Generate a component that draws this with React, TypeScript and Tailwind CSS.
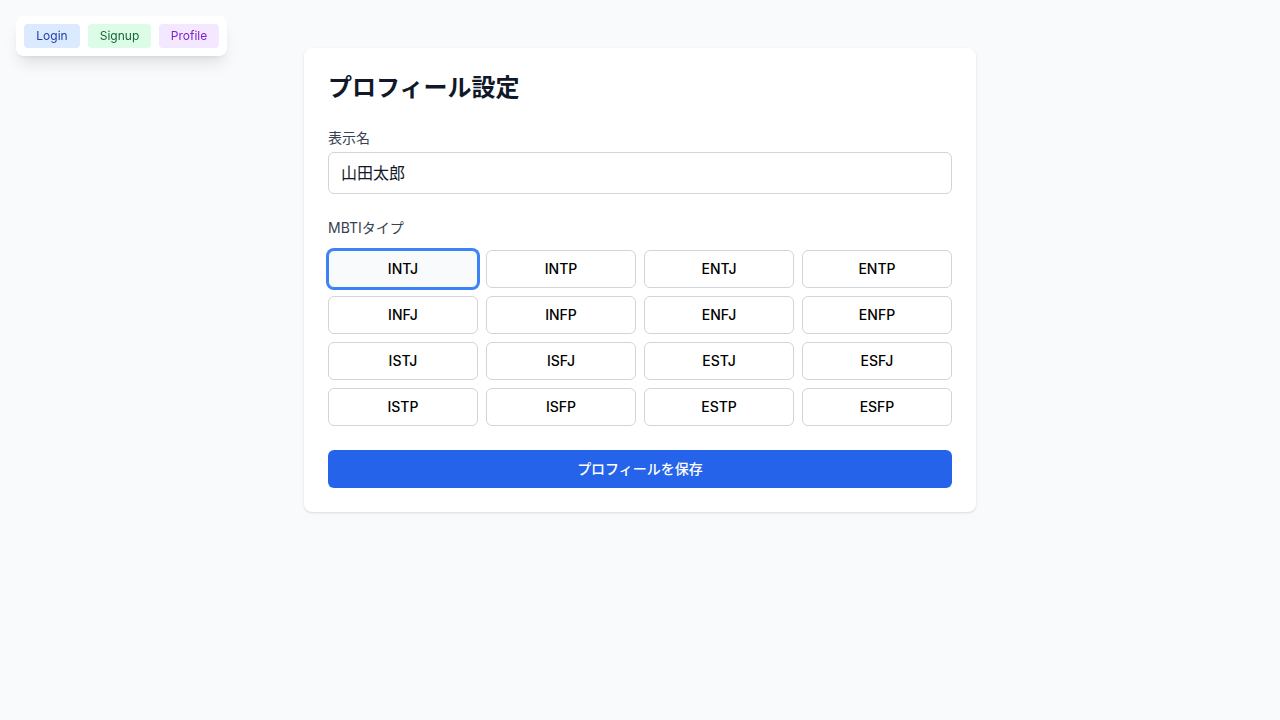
import { useState } from 'react'

const TYPES = [
  'INTJ', 'INTP', 'ENTJ', 'ENTP',
  'INFJ', 'INFP', 'ENFJ', 'ENFP',
  'ISTJ', 'ISFJ', 'ESTJ', 'ESFJ',
  'ISTP', 'ISFP', 'ESTP', 'ESFP',
]

export default function App() {
  const [name, setName] = useState('山田太郎')
  const [mbti, setMbti] = useState('INTJ')

  return (
    <div
      className="min-h-screen bg-[#f9fafb] py-12"
      style={{ fontFamily: 'Inter, "Noto Sans CJK JP", sans-serif' }}
    >
      {/* dev nav */}
      <div className="fixed top-4 left-4 z-10 flex gap-2 rounded-lg bg-white p-2 shadow-lg">
        <button className="w-14 rounded py-1 text-xs text-[#1e40af] bg-[#dbeafe]">Login</button>
        <button className="w-[63px] rounded py-1 text-xs text-[#166534] bg-[#dcfce7]">Signup</button>
        <button className="w-[60px] rounded py-1 text-xs text-[#7e22ce] bg-[#f3e8ff]">Profile</button>
      </div>

      <div className="mx-auto max-w-2xl rounded-lg bg-white p-6 shadow">
        <h1 className="mb-6 text-2xl font-bold text-[#111827]">プロフィール設定</h1>

        <div className="mb-6">
          <label className="mb-1 block text-sm text-[#374151]">表示名</label>
          <input
            type="text"
            value={name}
            onChange={e => setName(e.target.value)}
            className="w-full rounded-md border border-[#d1d5db] px-3 py-2 text-base text-[#111827] focus:outline-none"
          />
        </div>

        <div>
          <label className="mb-3 block text-sm text-[#374151]">MBTIタイプ</label>
          <div className="grid grid-cols-4 gap-2">
            {TYPES.map(t => (
              <button
                key={t}
                onClick={() => setMbti(t)}
                className={
                  mbti === t
                    ? 'h-[38px] rounded-md border border-[#3b82f6] bg-[#f9fafb] text-sm font-medium text-black ring-2 ring-[#3b82f6]'
                    : 'h-[38px] rounded-md border border-[#d1d5db] bg-white text-sm font-medium text-black'
                }
              >
                {t}
              </button>
            ))}
          </div>
        </div>

        <button className="mt-6 h-[38px] w-full rounded-md bg-[#2563eb] text-sm font-medium text-white">
          プロフィールを保存
        </button>
      </div>
    </div>
  )
}
